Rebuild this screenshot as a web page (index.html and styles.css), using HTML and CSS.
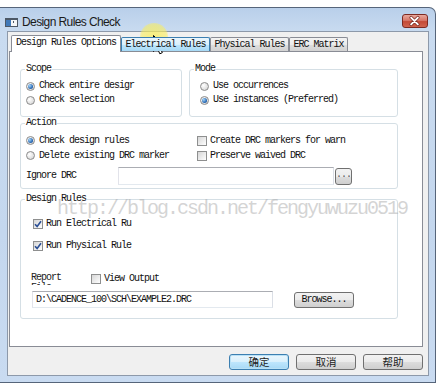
FILE: index.html
```html
<!DOCTYPE html>
<html>
<head>
<meta charset="utf-8">
<link rel="stylesheet" href="styles.css">
</head>
<body>
<div class="window">
  <div class="titlebar">
    <svg class="app-icon" width="13" height="9" viewBox="0 0 13 9">
      <rect x="0" y="0" width="13" height="9" fill="#4d5866"/>
      <rect x="1" y="2" width="11" height="6" fill="#f4f6f8"/>
      <rect x="1" y="2" width="5" height="6" fill="#3f78b8"/>
      <rect x="8" y="3" width="1" height="2" fill="#4d5866"/>
    </svg>
    <span class="title">Design Rules Check</span>
    <span class="close">
      <svg width="26" height="14" viewBox="0 0 26 14">
        <path d="M9.5 3.5 L16.5 10.5 M16.5 3.5 L9.5 10.5" stroke="#7a2a22" stroke-width="3.6" stroke-linecap="round"/>
        <path d="M9.5 3.5 L16.5 10.5 M16.5 3.5 L9.5 10.5" stroke="#ffffff" stroke-width="2" stroke-linecap="round"/>
      </svg>
    </span>
  </div>
  <div class="client">
    <div class="tabs">
      <div class="tab active">Design Rules Options</div>
      <div class="tab hover w-elec">Electrical Rules</div>
      <div class="tab w-phys">Physical Rules</div>
      <div class="tab w-erc">ERC Matrix</div>
    </div>
    <div class="panel">
      <div class="row1">
        <fieldset class="group scope">
          <legend>Scope</legend>
          <div class="opt"><span class="radio on"></span><span>Check entire desigr</span></div>
          <div class="opt"><span class="radio"></span><span>Check selection</span></div>
        </fieldset>
        <fieldset class="group mode">
          <legend>Mode</legend>
          <div class="inset-mode">
            <div class="opt"><span class="radio"></span><span>Use occurrences</span></div>
            <div class="opt"><span class="radio on"></span><span>Use instances (Preferred)</span></div>
          </div>
        </fieldset>
      </div>
      <fieldset class="group action">
        <legend>Action</legend>
        <div class="action-grid">
          <div class="opt r15"><span class="radio on"></span><span>Check design rules</span></div>
          <div class="opt r15 cb"><span class="check"></span><span>Create DRC markers for warn</span></div>
          <div class="opt r15"><span class="radio"></span><span>Delete existing DRC marker</span></div>
          <div class="opt r15 cb"><span class="check"></span><span>Preserve waived DRC</span></div>
        </div>
        <div class="ignore-row">
          <span class="ignore-label">Ignore DRC</span>
          <span class="input ignore-input"></span>
          <span class="btn small-btn">...</span>
        </div>
      </fieldset>
      <fieldset class="group rules">
        <legend>Design Rules</legend>
        <div class="inset-rules">
          <div class="opt r15 cb first"><span class="check"><svg width="8" height="8" viewBox="0 0 8 8"><path d="M1 4.2 L3.1 6.4 L7 1.2" fill="none" stroke="#2b4f95" stroke-width="1.6"/></svg></span><span>Run Electrical Ru</span></div>
          <div class="opt r15 cb second"><span class="check"><svg width="8" height="8" viewBox="0 0 8 8"><path d="M1 4.2 L3.1 6.4 L7 1.2" fill="none" stroke="#2b4f95" stroke-width="1.6"/></svg></span><span>Run Physical Rule</span></div>
          <div class="report-row">
            <span class="report-label">Report<br>File</span>
            <span class="opt cb"><span class="check"></span><span>View Output</span></span>
          </div>
          <div class="path-row">
            <span class="input path-input">D:\CADENCE_100\SCH\EXAMPLE2.DRC</span>
            <span class="btn browse-btn">Browse...</span>
          </div>
        </div>
      </fieldset>
    </div>
    <div class="buttons">
      <span class="btn dlg-btn default">确定</span>
      <span class="btn dlg-btn">取消</span>
      <span class="btn dlg-btn">帮助</span>
    </div>
  </div>
</div>
<div class="watermark">http://blog.csdn.net/fengyuwuzu0519</div>
<div class="halo"></div>
<svg class="cursor" width="13" height="21" viewBox="0 0 13 21">
  <path d="M0.5 0.5 L0.5 16.5 L4.3 12.9 L6.8 18.8 L9.3 17.7 L6.9 12 L11.8 12 Z" fill="#ffffff" stroke="#000000" stroke-width="1" stroke-linejoin="round"/>
</svg>
</body>
</html>
```

FILE: styles.css
```css
* { box-sizing: border-box; }

body {
  margin: 0;
  width: 444px;
  height: 392px;
  overflow: hidden;
  background: #ffffff;
  position: relative;
  font-family: "Liberation Mono", "DejaVu Sans Mono", monospace;
  font-size: 10px;
  letter-spacing: -1px;
  color: #111;
}

.window {
  margin-top: 7px;
  width: 436px;
  height: 376px;
  border: 1px solid #56657a;
  border-left: none;
  border-radius: 0 7px 0 0;
  background: linear-gradient(#b9cfea, #c9dbf0 24px, #c4d7ee 60%, #c9dbf1);
  padding: 0 6px 6px 7px;
  display: flex;
  flex-direction: column;
}

.titlebar {
  height: 23px;
  display: flex;
  align-items: flex-start;
}

.app-icon {
  margin-left: -2px;
  margin-top: 10px;
  flex: none;
}

.title {
  margin-left: 4px;
  margin-top: 7px;
  line-height: 14px;
  font-family: "Liberation Sans", Arial, sans-serif;
  font-size: 12px;
  letter-spacing: -0.6px;
  color: #1b1b1b;
}

.close {
  margin-left: auto;
  margin-right: 1px;
  margin-top: 6px;
  width: 26px;
  height: 14px;
  border: 1px solid #7d2a22;
  border-radius: 3px;
  background: linear-gradient(#e8a89c, #d7786a 45%, #c44a36 55%, #d0644f);
  display: flex;
}

.close svg { margin: -1px 0 0 -1px; }

.client {
  height: 345px;
  border: 1px solid #8d99aa;
  background: #f0f0f0;
  padding: 3px 5px 0 1px;
}

.tabs {
  display: flex;
  align-items: flex-end;
  height: 16px;
  margin-left: 2px;
  position: relative;
  z-index: 1;
}

.tab {
  height: 14px;
  border: 1px solid #898c95;
  border-bottom: none;
  border-radius: 2px 2px 0 0;
  background: linear-gradient(#f3f3f3, #ebebeb 50%, #dedede 51%, #d2d2d2);
  display: flex;
  align-items: center;
  justify-content: center;
  white-space: nowrap;
  line-height: 10px;
}

.tab.active {
  width: 110px;
  height: 17px;
  margin-bottom: -1px;
  background: #ffffff;
  padding-bottom: 2px;
}

.tab.hover {
  border-color: #3c7fb1;
  background: linear-gradient(#eaf6fd, #d9f0fc 50%, #bee6fd 51%, #a7d9f5);
}

.w-elec { width: 89px; }
.w-phys { width: 79px; }
.w-erc { width: 59px; }

.panel {
  height: 296px;
  border: 1px solid #898c95;
  background: #ffffff;
  padding: 12px 0 0 10px;
}

.row1 {
  display: flex;
  gap: 7px;
  width: 378px;
}

.group {
  margin: 0;
  min-width: 0;
  border: 1px solid #d5dfe5;
  border-radius: 3px;
  padding: 5px 0 9px 5px;
}

.group legend {
  padding: 0 1px;
  margin-left: -1px;
  height: 10px;
  line-height: 10px;
}

.scope { width: 162px; }
.mode { width: 209px; }

.inset-mode { margin-left: 5px; }

.opt {
  display: flex;
  align-items: center;
  gap: 4px;
  height: 14px;
  white-space: nowrap;
  line-height: 10px;
}

.opt.r15 { height: 15px; }
.opt.cb { gap: 3px; }

.radio {
  width: 9px;
  height: 9px;
  flex: none;
  border-radius: 50%;
  border: 1px solid #8b8b8b;
  background: radial-gradient(circle at 35% 35%, #ffffff, #e2e2e2 60%, #cfcfcf);
  display: flex;
  align-items: center;
  justify-content: center;
}

.radio.on::after {
  content: "";
  width: 5px;
  height: 5px;
  border-radius: 50%;
  background: radial-gradient(circle at 35% 35%, #a6d6f8, #2566b3 65%, #0f3b78);
}

.check {
  width: 10px;
  height: 10px;
  flex: none;
  border: 1px solid #8e8f8f;
  background: linear-gradient(135deg, #d6d6d6, #f6f6f6 80%, #ffffff);
  display: flex;
  align-items: center;
  justify-content: center;
}

.action {
  width: 378px;
  margin-top: 1px;
  padding: 5px 0 3px 5px;
}

.action-grid {
  display: grid;
  grid-template-columns: 171px 1fr;
}

.ignore-row {
  display: flex;
  align-items: center;
  margin-top: 4px;
  height: 18px;
}

.ignore-label { width: 92px; line-height: 10px; }

.input {
  display: flex;
  align-items: center;
  background: #ffffff;
  border: 1px solid;
  border-color: #abadb3 #dbdfe6 #e3e9ef #e2e3ea;
  white-space: nowrap;
  line-height: 10px;
}

.ignore-input { width: 216px; height: 18px; }

.btn {
  display: flex;
  align-items: center;
  justify-content: center;
  border: 1px solid #707070;
  border-radius: 3px;
  background: linear-gradient(#f2f2f2, #ebebeb 50%, #dddddd 51%, #cfcfcf);
  line-height: 10px;
  white-space: nowrap;
}

.small-btn {
  width: 17px;
  height: 17px;
  margin-left: 1px;
  color: #555;
  padding-bottom: 3px;
}

.rules {
  width: 378px;
  margin-top: 5px;
  padding: 12px 0 10px 5px;
}

.inset-rules { margin-left: 7px; }

.opt.second { margin-top: 7px; }

.report-row {
  display: flex;
  align-items: center;
  margin-top: 18px;
  height: 15px;
}

.report-label {
  width: 60px;
  margin-left: -2px;
  height: 13px;
  line-height: 10px;
  overflow: hidden;
  padding-top: 1px;
  color: #222;
}

.path-row {
  display: flex;
  align-items: center;
  margin-top: 5px;
  height: 17px;
}

.path-input {
  width: 241px;
  height: 17px;
  margin-left: -1px;
  padding-left: 3px;
}

.browse-btn {
  width: 60px;
  height: 16px;
  margin-left: 21px;
}

.buttons {
  display: flex;
  justify-content: flex-end;
  gap: 7px;
  margin-top: 7px;
}

.dlg-btn {
  width: 60px;
  height: 16px;
  font-family: "Noto Sans CJK SC", "Noto Sans", sans-serif;
  font-size: 10.5px;
  letter-spacing: 0;
  color: #222;
  line-height: 12px;
}

.dlg-btn.default {
  border-color: #3c7fb1;
  background: linear-gradient(#eaf6fd, #d9f0fc 50%, #bee6fd 51%, #a7d9f5);
  box-shadow: inset 0 0 0 1px #b9e1f6;
}

.watermark {
  position: absolute;
  left: 57px;
  top: 199px;
  font-family: "Liberation Mono", monospace;
  font-size: 20px;
  line-height: 20px;
  letter-spacing: -2px;
  color: rgba(170, 170, 170, 0.5);
  white-space: nowrap;
}

.halo {
  position: absolute;
  left: 140px;
  top: 23px;
  width: 28px;
  height: 28px;
  border-radius: 50%;
  background: radial-gradient(circle, rgba(250, 238, 90, 0.75) 0, rgba(250, 238, 90, 0.6) 60%, rgba(250, 238, 90, 0) 100%);
}

.cursor {
  position: absolute;
  left: 153px;
  top: 35px;
}
```
